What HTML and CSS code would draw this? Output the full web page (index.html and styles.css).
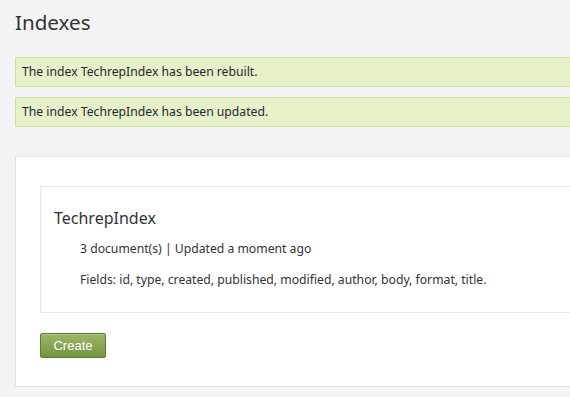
FILE: index.html
```html
<!DOCTYPE html>
<html lang="en">
<head>
  <meta charset="UTF-8" />
  <title>Indexes</title>
  <link rel="stylesheet" href="styles.css">
</head>
<body>
  <h1 class="page-title">Indexes</h1>

  <div class="message">The index TechrepIndex has been rebuilt.</div>
  <div class="message">The index TechrepIndex has been updated.</div>

  <div class="card">
    <div class="index-item">
      <h2>TechrepIndex</h2>
      <p class="meta">3 document(s) | Updated a moment ago</p>
      <p class="meta">Fields: id, type, created, published, modified, author, body, format, title.</p>
    </div>

    <button class="btn-create">Create</button>
  </div>
</body>
</html>
```

FILE: styles.css
```css
* {
  box-sizing: border-box;
}

body {
  margin: 0;
  padding: 0 0 0 15px;
  background: #f2f3f5;
  font-family: 'Noto Sans', 'Open Sans', sans-serif;
  font-size: 12.2px;
  color: #333;
}

.page-title {
  margin: 0;
  padding-top: 8px;
  height: 57px;
  font-size: 20.6px;
  font-weight: normal;
  color: #333;
}

.message {
  height: 30px;
  line-height: 28px;
  padding: 0 6px;
  margin-bottom: 10px;
  background: #e6f0c9;
  border: 1px solid #cde19a;
  border-right: none;
  color: #1d2a30;
}

.card {
  margin-top: 29px;
  background: #fff;
  border: 1px solid #e3e4e6;
  border-right: none;
  padding: 29px 0 28px 24px;
}

.index-item {
  border: 1px solid #e6e6e6;
  border-right: none;
  height: 127px;
  padding: 19px 13px 0;
}

.index-item h2 {
  margin: 0 0 10px;
  font-size: 16px;
  font-weight: normal;
  line-height: 24px;
  color: #333;
}

.meta {
  margin: 0 0 13px 26px;
  line-height: 18px;
}

.btn-create {
  margin-top: 20px;
  width: 66px;
  height: 25px;
  font-family: 'Liberation Sans', Arial, sans-serif;
  font-size: 13px;
  color: #fff;
  border: 1px solid #5c7c34;
  border-radius: 2px;
  background: linear-gradient(to bottom, #9ab866, #74943f);
  box-shadow: inset 0 1px 0 rgba(255, 255, 255, 0.2);
  cursor: pointer;
  display: block;
}
```
